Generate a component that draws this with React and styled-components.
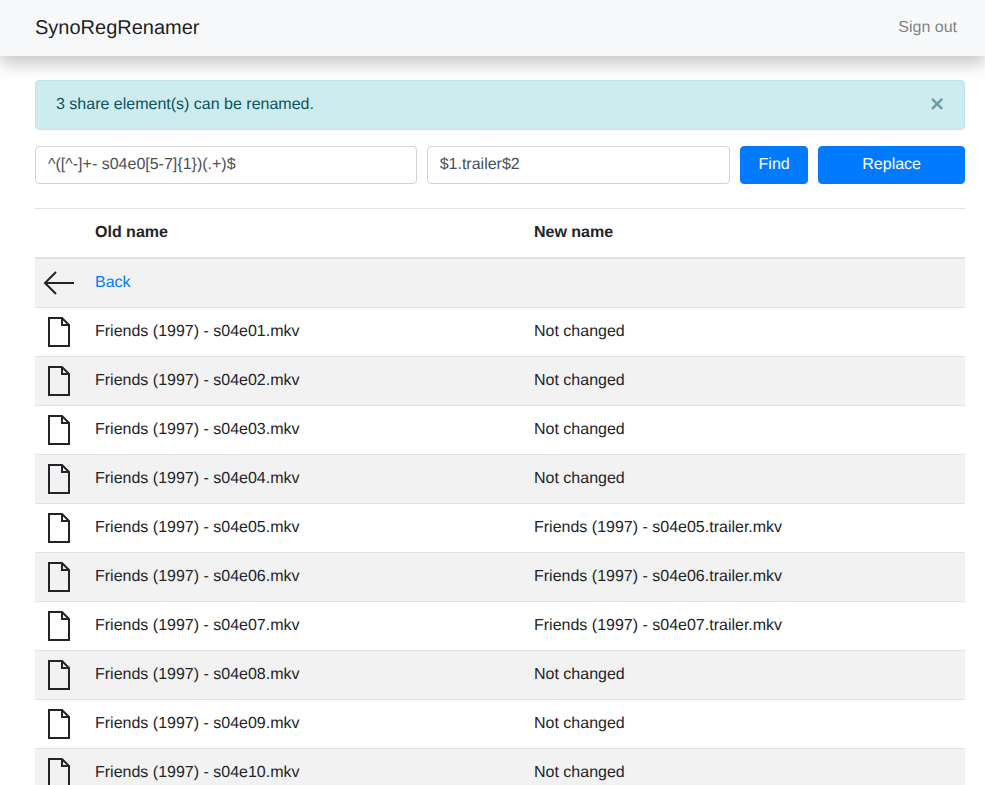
import React from 'react';
import styled, { createGlobalStyle } from 'styled-components';

const GlobalStyle = createGlobalStyle`
  * {
    box-sizing: border-box;
  }
  body {
    margin: 0;
    background: #fff;
    color: #212529;
    font-family: "Liberation Sans", Arial, sans-serif;
    font-size: 16px;
    line-height: 1.5;
    text-rendering: geometricPrecision;
  }
`;

const Navbar = styled.nav`
  align-items: center;
  background: #f8f9fa;
  box-shadow: 0 8px 16px rgba(0, 0, 0, 0.22);
  display: flex;
  height: 56px;
  justify-content: space-between;
  padding: 0 28px 0 35px;
`;

const Brand = styled.a`
  color: rgba(0, 0, 0, 0.9);
  font-size: 20px;
`;

const SignOut = styled.a`
  color: rgba(0, 0, 0, 0.5);
`;

const Main = styled.main`
  padding: 24px 20px 0 35px;
`;

const Alert = styled.div`
  align-items: center;
  background: #cdecef;
  border: 1px solid #bee5eb;
  border-radius: 4px;
  color: #0c5460;
  display: flex;
  height: 50px;
  justify-content: space-between;
  margin-bottom: 16px;
  padding: 0 20px;
`;

const Close = styled.span`
  color: #0c5460;
  font-size: 24px;
  font-weight: 700;
  opacity: 0.5;
  text-shadow: 0 1px 0 #fff;
`;

const SearchForm = styled.form`
  display: grid;
  gap: 10px;
  grid-template-columns: repeat(12, 1fr);
  margin-bottom: 24px;
`;

const Field = styled.input`
  background: #fff;
  border: 1px solid #ced4da;
  border-radius: 4px;
  color: #495057;
  font: inherit;
  grid-column: span ${props => props.$span};
  height: 38px;
  min-width: 0;
  padding: 6px 12px;
  text-rendering: inherit;
`;

const Button = styled.button`
  background: #007bff;
  border: 1px solid #007bff;
  border-radius: 4px;
  color: #fff;
  font: inherit;
  grid-column: span ${props => props.$span};
  height: 38px;
  padding: 6px 12px;
  text-rendering: inherit;
`;

const Table = styled.table`
  border-collapse: collapse;
  table-layout: fixed;
  width: 100%;
`;

const Head = styled.th`
  border-bottom: 2px solid #dee2e6;
  border-top: 1px solid #dee2e6;
  padding: 12px;
  text-align: left;
  width: ${props => props.$width || 'auto'};
`;

const Row = styled.tr`
  background: ${props => (props.$striped ? '#f2f2f2' : 'transparent')};
`;

const Cell = styled.td`
  border-bottom: 1px solid #dee2e6;
  height: 49px;
  padding: 12px;
`;

const IconCell = styled(Cell)`
  padding: 0 0 0 ${props => props.$inset}px;
  vertical-align: middle;
`;

const BackLink = styled.a`
  color: #007bff;
`;

const Icon = styled.svg`
  display: block;
  fill: none;
  stroke: #212529;
`;

const ArrowIcon = () => (
  <Icon width="32" height="32" viewBox="0 0 32 32" strokeWidth="2">
    <path d="M31 16H2M13 5 2 16l11 11" />
  </Icon>
);

const FileIcon = () => (
  <Icon width="24" height="32" viewBox="0 0 24 32" strokeWidth="2">
    <path d="M2 2h13l7 7v21H2zM15 2v7h7" />
  </Icon>
);

const names = ['01', '02', '03', '04', '05', '06', '07', '08', '09', '10'];
const renamed = ['05', '06', '07'];

export default function App() {
  return (
    <>
      <GlobalStyle />
      <Navbar>
        <Brand>SynoRegRenamer</Brand>
        <SignOut>Sign out</SignOut>
      </Navbar>
      <Main>
        <Alert>
          3 share element(s) can be renamed.
          <Close>×</Close>
        </Alert>
        <SearchForm>
          <Field $span={5} defaultValue="^([^-]+- s04e0[5-7]{1})(.+)$" />
          <Field $span={4} defaultValue="$1.trailer$2" />
          <Button $span={1} type="button">Find</Button>
          <Button $span={2} type="button">Replace</Button>
        </SearchForm>
        <Table>
          <thead>
            <tr>
              <Head $width="48px" />
              <Head $width="439px">Old name</Head>
              <Head>New name</Head>
            </tr>
          </thead>
          <tbody>
            <Row $striped>
              <IconCell $inset={8}><ArrowIcon /></IconCell>
              <Cell><BackLink>Back</BackLink></Cell>
              <Cell />
            </Row>
            {names.map((n, i) => (
              <Row key={n} $striped={i % 2 === 1}>
                <IconCell $inset={12}><FileIcon /></IconCell>
                <Cell>Friends (1997) - s04e{n}.mkv</Cell>
                <Cell>
                  {renamed.includes(n) ? `Friends (1997) - s04e${n}.trailer.mkv` : 'Not changed'}
                </Cell>
              </Row>
            ))}
          </tbody>
        </Table>
      </Main>
    </>
  );
}
